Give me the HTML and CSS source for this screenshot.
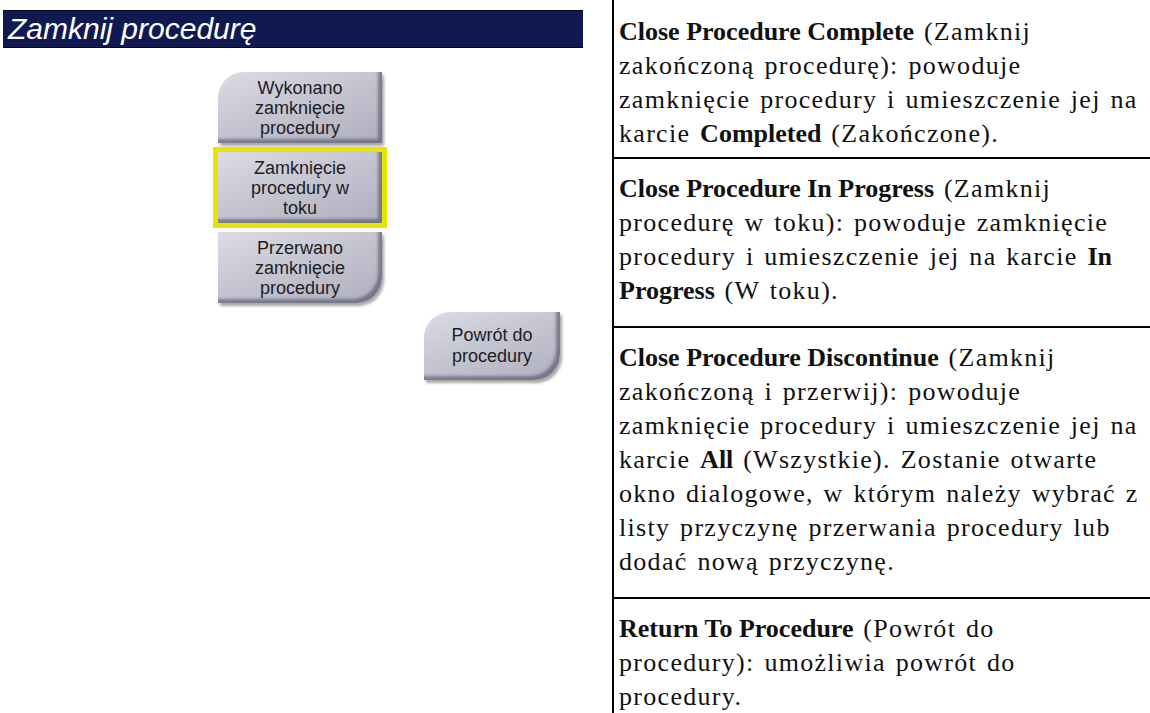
FILE: index.html
```html
<!DOCTYPE html>
<html lang="pl">
<head>
    <meta charset="UTF-8">
    <meta name="viewport" content="width=device-width, initial-scale=1.0">
    <title>Zamknij procedurę</title>
    <link rel="stylesheet" href="styles.css">
</head>
<body>
    <div class="page">
        <div class="screen">
            <div class="title-bar">Zamknij procedurę</div>
            <div class="actions">
                <div class="btn-stack">
                    <button type="button" class="btn btn-first">Wykonano<br>zamknięcie<br>procedury</button>
                    <button type="button" class="btn btn-selected">Zamknięcie<br>procedury w<br>toku</button>
                    <button type="button" class="btn btn-last">Przerwano<br>zamknięcie<br>procedury</button>
                </div>
                <button type="button" class="btn btn-single">Powrót do<br>procedury</button>
            </div>
        </div>

        <div class="descriptions">
            <div class="row row-first">
                <b>Close Procedure Complete</b> (Zamknij<br>
                zakończoną procedurę): powoduje<br>
                zamknięcie procedury i umieszczenie jej na<br>
                karcie <b>Completed</b> (Zakończone).
            </div>
            <div class="row">
                <b>Close Procedure In Progress</b> (Zamknij<br>
                procedurę w toku): powoduje zamknięcie<br>
                procedury i umieszczenie jej na karcie <b>In</b><br>
                <b>Progress</b> (W toku).
            </div>
            <div class="row">
                <b>Close Procedure Discontinue</b> (Zamknij<br>
                zakończoną i przerwij): powoduje<br>
                zamknięcie procedury i umieszczenie jej na<br>
                karcie <b>All</b> (Wszystkie). Zostanie otwarte<br>
                okno dialogowe, w którym należy wybrać z<br>
                listy przyczynę przerwania procedury lub<br>
                dodać nową przyczynę.
            </div>
            <div class="row row-last">
                <b>Return To Procedure</b> (Powrót do<br>
                procedury): umożliwia powrót do<br>
                procedury.
            </div>
        </div>
    </div>
</body>
</html>
```

FILE: styles.css
```css
body {
    margin: 0;
    background-color: white;
    height: 713px;
    overflow: hidden;
}

.page {
    display: flex;
    height: 713px;
}

/* left: the screen capture */
.screen {
    width: 612px;
    flex-shrink: 0;
    padding-top: 10px;
    padding-left: 3px;
    box-sizing: border-box;
    font-family: "Liberation Sans", Arial, sans-serif;
}

.title-bar {
    width: 580px;
    height: 38px;
    box-sizing: border-box;
    background-color: #111a50;
    border-top: 1px solid #05071a;
    border-bottom: 1px solid #05071a;
    color: white;
    font-style: italic;
    font-size: 30px;
    line-height: 35px;
    padding-left: 5px;
}

.actions {
    display: flex;
    align-items: flex-start;
    gap: 42px;
    margin-top: 24px;
    margin-left: 215px;
}

.btn-stack {
    display: flex;
    flex-direction: column;
    gap: 9px;
}

.btn {
    width: 164px;
    height: 71px;
    padding: 0;
    border: none;
    font-family: "Liberation Sans", Arial, sans-serif;
    font-size: 18px;
    line-height: 20px;
    color: #1c1c24;
    text-align: center;
    background: linear-gradient(160deg, #dcdce6 0%, #c6c6d2 45%, #aeaebf 100%);
    box-shadow: inset -4px -4px 3px rgba(70, 70, 90, 0.55), 2px 3px 3px rgba(0, 0, 0, 0.35);
    cursor: pointer;
}

.btn-first {
    border-top-left-radius: 26px;
}

.btn-last {
    border-bottom-right-radius: 26px;
}

.btn-selected {
    outline: 5px solid #e4e600;
}

.btn-single {
    width: 136px;
    height: 68px;
    margin-top: 240px;
    line-height: 21px;
    border-top-left-radius: 26px;
    border-bottom-right-radius: 26px;
}

/* right: description table */
.descriptions {
    flex: 1;
    border-left: 2px solid #000;
    font-family: "Liberation Serif", "Times New Roman", serif;
    font-size: 26px;
    line-height: 34px;
    letter-spacing: 1.3px;
    word-spacing: 2px;
    color: #111;
    white-space: nowrap;
}

.row {
    padding: 13px 5px 18px 5px;
    border-bottom: 2px solid #000;
}

.row-first {
    padding-top: 15px;
    padding-bottom: 6px;
}

.row-last {
    border-bottom: none;
}

b {
    font-weight: bold;
    letter-spacing: 0;
    word-spacing: 0;
}
```
